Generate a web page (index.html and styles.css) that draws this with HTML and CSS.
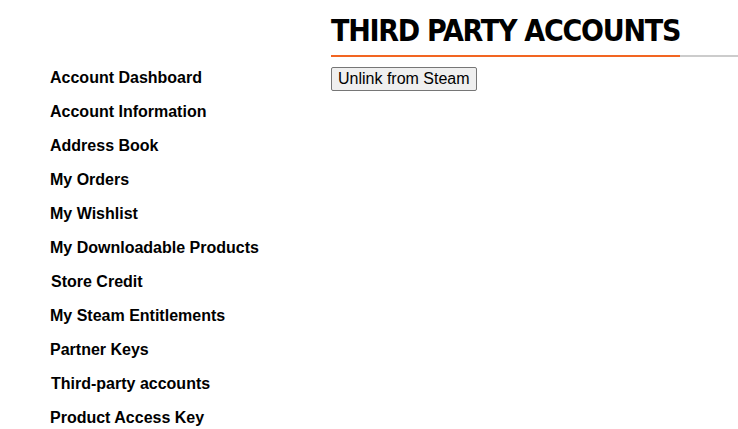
FILE: index.html
```html
<!DOCTYPE html>
<html>
<head>
<meta charset="utf-8">
<link rel="stylesheet" href="styles.css">
</head>
<body>
<div class="page">
  <nav class="sidebar">
    <ul class="nav">
      <li><a href="#">Account Dashboard</a></li>
      <li><a href="#">Account Information</a></li>
      <li><a href="#">Address Book</a></li>
      <li><a href="#">My Orders</a></li>
      <li><a href="#">My Wishlist</a></li>
      <li><a href="#">My Downloadable Products</a></li>
      <li><a href="#" class="shift">Store Credit</a></li>
      <li><a href="#">My Steam Entitlements</a></li>
      <li><a href="#">Partner Keys</a></li>
      <li><a href="#" class="shift">Third-party accounts</a></li>
      <li><a href="#">Product Access Key</a></li>
    </ul>
  </nav>
  <main class="content">
    <div class="title-wrap">
      <h1 class="title">THIRD PARTY ACCOUNTS</h1>
    </div>
    <button class="btn">Unlink from Steam</button>
  </main>
</div>
</body>
</html>
```
FILE: styles.css
```css
html, body {
  margin: 0;
  padding: 0;
  background: #fff;
}
.page {
  display: flex;
  font-family: "Liberation Sans", Arial, sans-serif;
}
.sidebar {
  width: 331px;
  flex: none;
  padding-left: 50px;
  box-sizing: border-box;
  padding-top: 67px;
}
.nav {
  list-style: none;
  margin: 0;
  padding: 0;
  display: flex;
  flex-direction: column;
}
.nav li {
  height: 34px;
  line-height: 22px;
}
.nav a {
  color: #000;
  font-weight: bold;
  font-size: 16px;
  text-decoration: none;
}
.nav a.shift {
  margin-left: 1px;
}
.content {
  flex: 1;
  padding-top: 7px;
}
.title-wrap {
  border-bottom: 2px solid #ccc;
}
.title {
  display: inline-block;
  margin: 0 0 -2px 0;
  font-family: "DejaVu Sans Condensed", "DejaVu Sans", sans-serif;
  font-stretch: condensed;
  font-weight: bold;
  font-size: 30px;
  line-height: 48px;
  color: #000;
  border-bottom: 2px solid #f26522;
  letter-spacing: -1.25px;
}
.btn {
  margin-top: 10px;
  font-family: "Liberation Sans", Arial, sans-serif;
  font-size: 16px;
  padding: 2px 6px;
  background: #efefef;
  border: 1px solid #767676;
  border-radius: 2px;
  color: #000;
}
```
